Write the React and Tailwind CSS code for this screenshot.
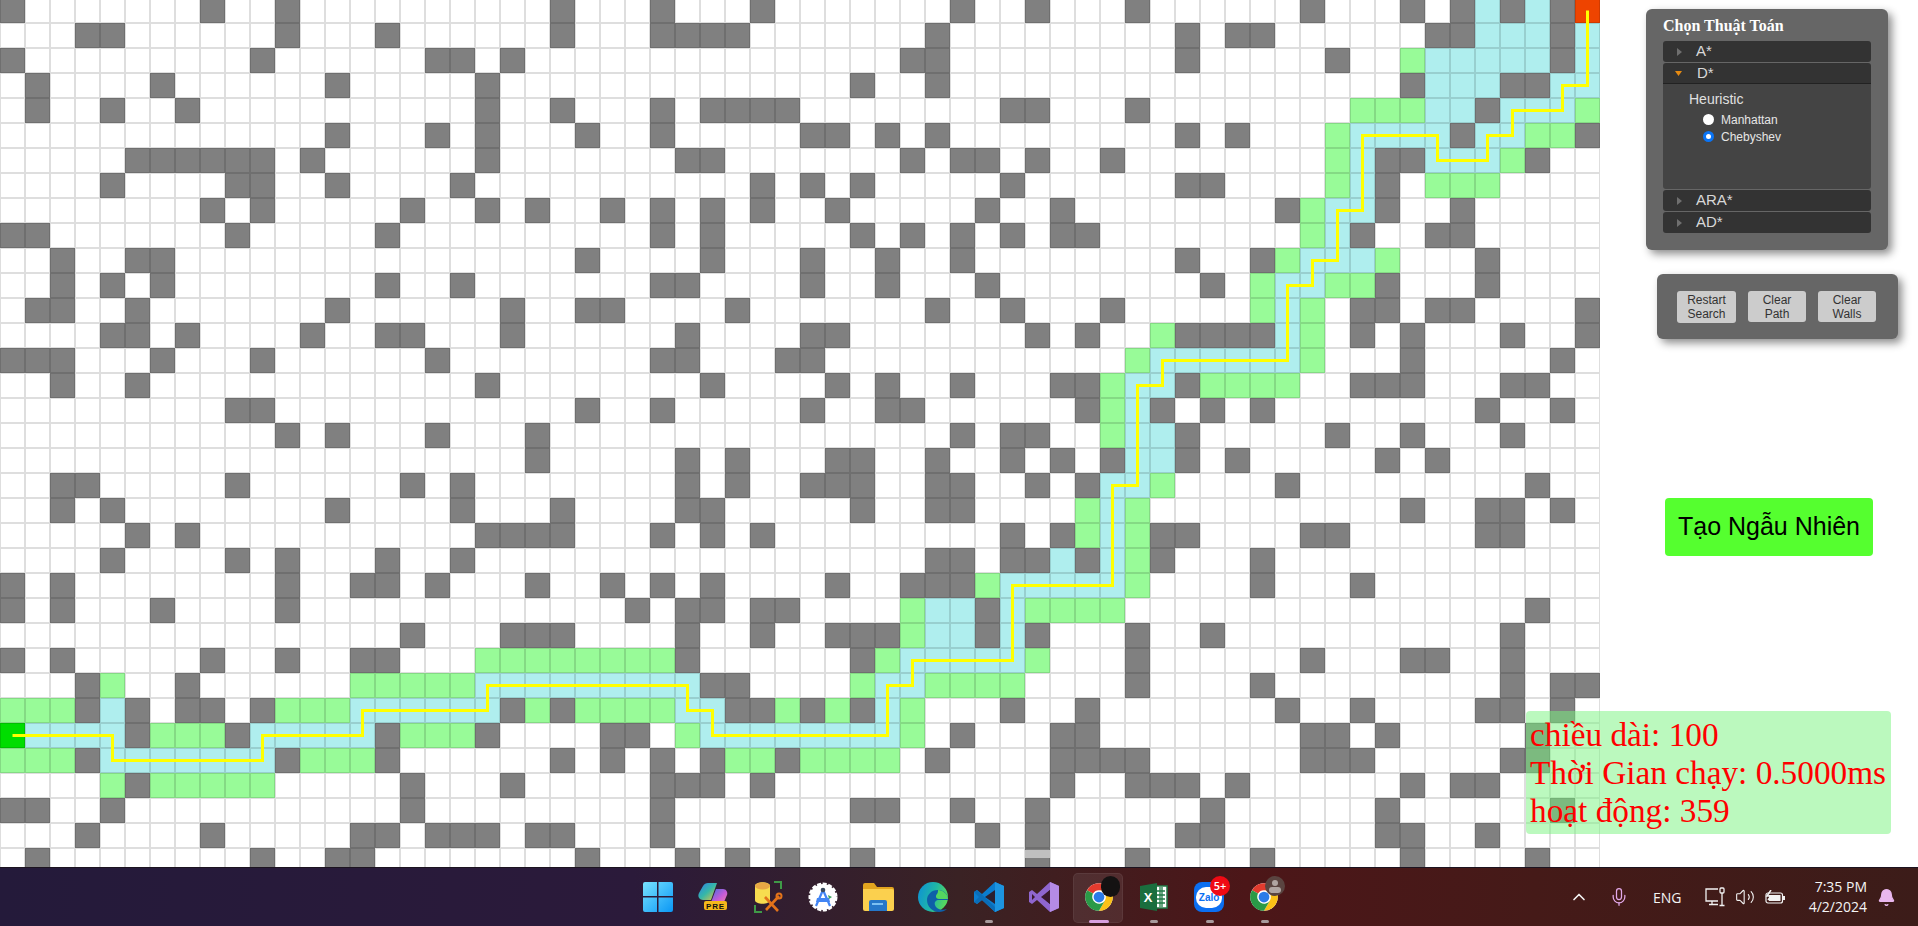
import React from 'react';
import { ChevronUp, Mic, Volume2, Bell } from 'lucide-react';

const COLS = 64;
const ROWS = 35;

const range = (a, b) => Array.from({ length: b - a + 1 }, (_, i) => a + i);

const WALLS = [
  [0, 8, 11, 22, 26, 30, 38, 41, 45, 52, 56, 58, 60, 62],
  [3, 4, 11, 15, 22, 26, 27, 28, 29, 37, 47, 49, 50, 57, 58, 62],
  [0, 10, 17, 18, 20, 36, 37, 47, 53, 62],
  [1, 6, 13, 19, 34, 37, 56, 60, 61],
  [1, 4, 7, 19, 22, 26, 28, 29, 30, 31, 40, 41, 45, 59],
  [13, 17, 19, 23, 26, 32, 33, 35, 37, 47, 49, 58, 63],
  [5, 6, 7, 8, 9, 10, 12, 19, 27, 28, 36, 38, 39, 41, 44, 55, 56, 61],
  [4, 9, 10, 13, 18, 30, 32, 34, 40, 47, 48, 55],
  [8, 10, 16, 19, 21, 24, 26, 28, 30, 33, 39, 42, 51, 55, 58],
  [0, 1, 9, 15, 26, 28, 34, 36, 38, 40, 42, 43, 54, 57, 58],
  [2, 5, 6, 23, 28, 32, 35, 38, 47, 50, 59],
  [2, 4, 6, 15, 18, 26, 27, 32, 35, 39, 48, 55, 59],
  [1, 2, 5, 13, 20, 23, 24, 29, 37, 40, 44, 54, 55, 57, 58, 63],
  [4, 5, 7, 12, 15, 16, 20, 27, 32, 33, 41, 43, 47, 48, 49, 50, 54, 56, 60, 63],
  [0, 1, 2, 6, 10, 17, 26, 27, 31, 32, 56, 62],
  [2, 5, 19, 28, 33, 35, 38, 42, 43, 47, 54, 55, 56, 60, 61],
  [9, 10, 23, 26, 32, 35, 36, 43, 46, 48, 50, 59, 62],
  [11, 13, 17, 21, 38, 40, 41, 47, 53, 56, 60],
  [21, 27, 29, 33, 34, 37, 40, 42, 44, 47, 49, 55, 57],
  [2, 3, 9, 16, 18, 27, 29, 32, 33, 34, 37, 38, 41, 43, 51, 61],
  [2, 4, 13, 18, 22, 27, 28, 34, 37, 38, 56, 59, 60, 62],
  [5, 7, 19, 20, 21, 22, 26, 28, 30, 40, 42, 46, 47, 52, 53, 59, 60],
  [4, 9, 11, 15, 18, 37, 38, 40, 41, 43, 46, 50],
  [0, 2, 11, 14, 15, 17, 21, 24, 26, 28, 33, 36, 37, 38, 50, 54],
  [0, 2, 6, 11, 25, 27, 28, 30, 31, 39, 61],
  [16, 20, 21, 22, 27, 30, 33, 34, 35, 39, 41, 45, 48, 60],
  [0, 2, 8, 11, 14, 15, 27, 34, 45, 52, 56, 57, 60],
  [3, 7, 28, 29, 45, 50, 60, 62, 63],
  [3, 5, 7, 8, 10, 20, 22, 29, 30, 32, 34, 40, 43, 51, 54, 59, 60, 62],
  [5, 9, 15, 19, 24, 25, 38, 42, 43, 52, 53, 55, 61],
  [3, 11, 15, 22, 24, 26, 28, 31, 37, 42, 43, 44, 45, 52, 53, 54, 60, 61],
  [5, 16, 20, 26, 27, 28, 30, 42, 45, 46, 47, 49, 56, 58, 59],
  [0, 1, 4, 16, 26, 34, 35, 38, 41, 48, 55, 62],
  [3, 8, 14, 15, 17, 18, 19, 21, 22, 26, 39, 41, 47, 48, 55, 56, 59],
  [1, 10, 13, 14, 23, 27, 29, 31, 34, 41, 45, 50, 56, 61],
];

// row -> columns
const OPENED = {
  2: [56],
  4: [54, 55, 56, 63],
  5: [53, 61, 62],
  6: [53, 60],
  7: [53, 57, 58, 59],
  8: [52],
  9: [52],
  10: [51, 55],
  11: [50, 53, 54],
  12: [50, 52],
  13: [46, 52],
  14: [45, 52],
  15: [44, 48, 49, 50, 51],
  16: [44],
  17: [44],
  19: [46],
  20: [43, 45],
  21: [43, 45],
  22: [45],
  23: [39, 45],
  24: [36, 41, 42, 43, 44],
  25: [36],
  26: [...range(19, 26), 35, 41],
  27: [4, ...range(14, 18), 34, 37, 38, 39, 40],
  28: [0, 1, 2, 11, 12, 13, 21, 23, 24, 25, 26, 31, 33, 36],
  29: [6, 7, 8, 16, 17, 18, 27, 36],
  30: [0, 1, 2, 12, 13, 14, 29, 30, 32, 33, 34, 35],
  31: [4, ...range(6, 10)],
};

const CLOSED = {
  0: [59, 61],
  1: [59, 60, 61, 63],
  2: [57, 58, 59, 60, 61, 63],
  3: [57, 58, 59, 62, 63],
  4: [57, 58, 60, 61, 62],
  5: [54, 55, 56, 57, 59, 60],
  6: [54, 57, 58, 59],
  7: [54],
  8: [53, 54],
  9: [53],
  10: [52, 53, 54],
  11: [51, 52],
  12: [51],
  13: [51],
  14: range(46, 51),
  15: [45, 46],
  16: [45],
  17: [45, 46],
  18: [45, 46],
  19: [44, 45],
  20: [44],
  21: [44],
  22: [42, 44],
  23: range(40, 44),
  24: [37, 38, 40],
  25: [37, 38, 40],
  26: range(36, 40),
  27: [...range(19, 27), 35, 36],
  28: [4, ...range(14, 19), 27, 28, 35],
  29: [1, 2, 3, 4, ...range(10, 14), ...range(28, 35)],
  30: range(4, 10),
};

// [col, row] corners of the yellow line, goal to start
const PATH = [
  [63, 0], [63, 3], [62, 3], [62, 4], [60, 4], [60, 5], [59, 5], [59, 6], [57, 6], [57, 5], [54, 5], [54, 8],
  [53, 8], [53, 10], [52, 10], [52, 11], [51, 11], [51, 14], [46, 14], [46, 15], [45, 15], [45, 19], [44, 19],
  [44, 23], [40, 23], [40, 26], [36, 26], [36, 27], [35, 27], [35, 29], [28, 29], [28, 28], [27, 28], [27, 27],
  [19, 27], [19, 28], [14, 28], [14, 29], [10, 29], [10, 30], [4, 30], [4, 29], [0, 29],
];

const CELL_COLORS = {
  free: 'bg-white',
  wall: 'bg-[#808080]',
  opened: 'bg-[#98fb98]',
  closed: 'bg-[#afeeee]',
  start: 'bg-[#00dd00]',
  goal: 'bg-[#ee4400]',
};

const cellType = (row, col) => {
  if (row === 29 && col === 0) return 'start';
  if (row === 0 && col === 63) return 'goal';
  if (WALLS[row].includes(col)) return 'wall';
  if (OPENED[row]?.includes(col)) return 'opened';
  if (CLOSED[row]?.includes(col)) return 'closed';
  return 'free';
};

const Grid = () => (
  <div className="relative w-[1600px] shrink-0 -mt-[2px]">
    {range(0, ROWS - 1).map((row) => (
      <div key={row} className="flex">
        {range(0, COLS - 1).map((col) => (
          <div
            key={col}
            className={`w-[25px] h-[25px] shrink-0 shadow-[inset_0_0_0_1px_rgba(0,0,0,0.13)] ${CELL_COLORS[cellType(row, col)]}`}
          />
        ))}
      </div>
    ))}
    <svg className="absolute left-0 top-0" width="1600" height="875">
      <polyline
        points={PATH.map(([c, r]) => `${c * 25 + 12.5},${r * 25 + 12.5}`).join(' ')}
        fill="none"
        stroke="#ffff00"
        strokeWidth="3"
      />
    </svg>
  </div>
);

const Arrow = ({ open }) =>
  open ? (
    <svg width="7" height="5" className="ml-[12px] mr-[15px]">
      <polygon points="0,0 7,0 3.5,5" fill="#e58a12" />
    </svg>
  ) : (
    <svg width="5" height="8" className="ml-[14px] mr-[14px]">
      <polygon points="0,0 5,4 0,8" fill="#6f6f6f" />
    </svg>
  );

const AccordionHeader = ({ title, open }) => (
  <div className={`flex items-center h-[21px] bg-[#333333] text-[#d8d8d8] text-[15px] ${open ? 'rounded-t-[3px] border-b border-[#222222]' : 'rounded-[3px]'}`}>
    <Arrow open={open} />
    <span>{title}</span>
  </div>
);

const Radio = ({ label, checked }) => (
  <div className="flex items-center h-[17px] pl-[14px] text-[12px] text-[#e6e6e6]">
    {checked ? (
      <span className="w-[11px] h-[11px] rounded-full bg-white border-[3px] border-[#0a74f5] mr-[7px]" />
    ) : (
      <span className="w-[11px] h-[11px] rounded-full bg-white mr-[7px]" />
    )}
    {label}
  </div>
);

const AlgorithmPanel = () => (
  <div className="w-[242px] h-[241px] mt-[9px] ml-[46px] rounded-[6px] bg-[#666666] shadow-[4px_4px_8px_rgba(0,0,0,0.45)] pt-[8px] px-[17px]">
    <h1 className="text-[16px] font-bold text-white leading-[18px] h-[24px] font-['Liberation_Serif',serif]">Chọn Thuật Toán</h1>
    <div className="flex flex-col gap-[1px]">
      <AccordionHeader title="A*" />
      <div>
        <AccordionHeader title="D*" open />
        <div className="h-[105px] bg-[#444444] rounded-b-[3px] pt-[6px] pl-[26px]">
          <div className="text-[14px] text-[#e0e0e0] leading-[18px] mb-[3px]">Heuristic</div>
          <Radio label="Manhattan" />
          <Radio label="Chebyshev" checked />
        </div>
      </div>
      <AccordionHeader title="ARA*" />
      <AccordionHeader title="AD*" />
    </div>
  </div>
);

const ControlButton = ({ children, className }) => (
  <button className={`h-[31px] rounded-[3px] bg-[#cccccc] text-[#333333] text-[12px] leading-[14px] ${className}`}>{children}</button>
);

const ControlPanel = () => (
  <div className="w-[241px] h-[65px] mt-[24px] ml-[57px] rounded-[6px] bg-[#666666] shadow-[4px_4px_8px_rgba(0,0,0,0.45)] flex items-center pl-[20px] gap-[12px]">
    <ControlButton className="w-[59px] h-[32px]">Restart<br />Search</ControlButton>
    <ControlButton className="w-[58px]">Clear<br />Path</ControlButton>
    <ControlButton className="w-[58px]">Clear<br />Walls</ControlButton>
  </div>
);

const ChromeLogo = ({ size = 30 }) => (
  <svg width={size} height={size} viewBox="0 0 24 24">
    <circle cx="12" cy="12" r="11" fill="#fff" />
    <path d="M2.47 6.5A11 11 0 0 1 21.53 6.5L12 6.5A5.5 5.5 0 0 0 7.24 9.25Z" fill="#e33b2e" />
    <path d="M21.53 6.5A11 11 0 0 1 12 23L16.76 14.75A5.5 5.5 0 0 0 12 6.5Z" fill="#fbc116" />
    <path d="M12 23A11 11 0 0 1 2.47 6.5L7.24 9.25A5.5 5.5 0 0 0 16.76 14.75Z" fill="#2a9a47" />
    <circle cx="12" cy="12" r="4.3" fill="#2a7be8" />
  </svg>
);

const WindowsLogo = () => (
  <svg width="30" height="30" viewBox="0 0 30 30">
    <defs>
      <linearGradient id="win" x1="0" y1="0" x2="1" y2="1">
        <stop offset="0" stopColor="#78e3ff" />
        <stop offset="1" stopColor="#0a97f5" />
      </linearGradient>
    </defs>
    <path d="M2 0h12v14H0V2a2 2 0 0 1 2-2zM15.500 0H28a2 2 0 0 1 2 2v12H15.500zM0 15.500h14V30H2a2 2 0 0 1-2-2zM15.500 15.500H30V28a2 2 0 0 1-2 2H15.500z" fill="url(#win)" />
  </svg>
);

const CopilotLogo = () => (
  <svg width="32" height="32" viewBox="0 0 32 32">
    <defs>
      <linearGradient id="cop1" x1="0" y1="0" x2="1" y2="1">
        <stop offset="0" stopColor="#2f7fe8" />
        <stop offset="0.5" stopColor="#35b7a8" />
        <stop offset="1" stopColor="#f0c33a" />
      </linearGradient>
      <linearGradient id="cop2" x1="0" y1="0" x2="1" y2="1">
        <stop offset="0" stopColor="#3c6fe0" />
        <stop offset="0.55" stopColor="#c55bd8" />
        <stop offset="1" stopColor="#f7889d" />
      </linearGradient>
    </defs>
    <path d="M11 2h9l-6 17H6c-3 0-6-3-4-7l4-7c1-2 3-3 5-3z" fill="url(#cop1)" />
    <path d="M19 8h7c3 0 5 3 4 6l-3 7c-1 2-2 3-5 3h-9z" fill="url(#cop2)" />
    <rect x="7" y="20" width="23" height="9" rx="2" fill="#f5b81b" />
    <text x="18.500" y="27.500" textAnchor="middle" fontSize="8" fontWeight="700" fill="#111" fontFamily="Liberation Sans, sans-serif" letterSpacing="0.8">PRE</text>
  </svg>
);

const DbToolLogo = () => (
  <svg width="32" height="32" viewBox="0 0 32 32">
    <path d="M22 1h7v7M3 24v7h7" fill="none" stroke="#3f9a47" strokeWidth="2" />
    <path d="M3 5c0-5 15-5 15 0v14c0 5-15 5-15 0z" fill="#f7dc4f" />
    <ellipse cx="10.500" cy="5" rx="7.500" ry="3.500" fill="#e8a845" />
    <path d="M13 16l13 14M27 15L14 29" stroke="#e3731a" strokeWidth="2.600" />
    <circle cx="27" cy="15" r="2.500" fill="none" stroke="#e3731a" strokeWidth="2" />
  </svg>
);

const AndroidStudioLogo = () => (
  <svg width="30" height="30" viewBox="0 0 30 30">
    <circle cx="15" cy="15" r="13" fill="#fff" stroke="#fff" strokeWidth="3" strokeDasharray="4 1.500" />
    <path d="M15 8l7 16M15 8L8 24" stroke="#4285f4" strokeWidth="2.200" fill="none" />
    <path d="M9 16h12l1 4H8z" fill="#4285f4" />
    <circle cx="15" cy="8" r="2.300" fill="#3a4a5c" />
    <path d="M20 13l4 2-3 2z" fill="#3ba55d" />
  </svg>
);

const FolderLogo = () => (
  <svg width="31" height="28" viewBox="0 0 31 28">
    <path d="M0 2a2 2 0 0 1 2-2h9l3 4h15a2 2 0 0 1 2 2v3H0z" fill="#e2a51f" />
    <path d="M0 6h29a2 2 0 0 1 2 2v18a2 2 0 0 1-2 2H2a2 2 0 0 1-2-2z" fill="#fbd04e" />
    <path d="M6 19a2 2 0 0 1 2-2h14a2 2 0 0 1 2 2v9H6z" fill="#2577c9" />
    <rect x="9" y="20" width="11" height="2" fill="#7cc0f2" />
  </svg>
);

const EdgeLogo = () => (
  <svg width="30" height="30" viewBox="0 0 30 30">
    <defs>
      <linearGradient id="edge" x1="0" y1="0" x2="1" y2="0.300">
        <stop offset="0" stopColor="#0c8fd8" />
        <stop offset="0.6" stopColor="#1fb7a6" />
        <stop offset="1" stopColor="#54d660" />
      </linearGradient>
    </defs>
    <circle cx="15" cy="15" r="15" fill="url(#edge)" />
    <path d="M30 17c0-5-4-9-10-9-7 0-11 5-11 10 0 6 5 12 12 12 3 0 6-1 8-3-5 2-11 0-12-4-1-3 1-5 4-5h9z" fill="#0e5fa8" />
    <path d="M20 8c5 0 10 4 10 9h-9c-3 0-4-3-2-5 1-1 1-3 1-4z" fill="#54d660" />
  </svg>
);

const VsCodeLogo = () => (
  <svg width="30" height="30" viewBox="0 0 30 30">
    <path d="M21 0l9 4v22l-9 4L8 18l-5 4-3-2v-10l3-2 5 4z" fill="#0b7dcf" />
    <path d="M21 8L11 15l10 7z" fill="#2b2030" />
    <path d="M21 0l9 4v22l-9 4z" fill="#1d95e0" />
    <path d="M0 10l3-2 18 17v5L8 18 3 22l-3-2 5-5z" fill="#0a6db8" />
  </svg>
);

const VisualStudioLogo = () => (
  <svg width="30" height="30" viewBox="0 0 30 30">
    <path d="M21 0l9 4v22l-9 4L8 18l-5 4-3-2V10l3-2 5 4z" fill="#8f66cf" />
    <path d="M21 8L12 15l9 7z" fill="#3a1a2c" />
    <path d="M6 15L3 12v6z" fill="#3a1a2c" />
    <path d="M21 0l9 4v22l-9 4z" fill="#b58be6" />
    <path d="M21 8v14l-4-3.500V11.500z" fill="#3a1a2c" />
  </svg>
);

const ExcelLogo = () => (
  <svg width="28" height="28" viewBox="0 0 28 28">
    <rect x="12" y="3" width="15" height="22" fill="#fff" stroke="#1f7a45" strokeWidth="1.500" />
    <path d="M16 8h9M16 12h9M16 16h9M16 20h9M20 4v20M22 4v20" stroke="#1f7a45" strokeWidth="1.300" />
    <path d="M0 3l17-3v28L0 25z" fill="#1a6e3e" />
    <text x="8" y="19" textAnchor="middle" fontSize="13" fontWeight="700" fill="#fff" fontFamily="Liberation Sans, sans-serif">X</text>
  </svg>
);

const ZaloLogo = () => (
  <div className="relative w-[30px] h-[30px] rounded-[8px] bg-[#0b6ff2] flex items-center justify-center">
    <div className="w-[26px] h-[21px] rounded-[10px] bg-white flex items-center justify-center text-[10px] font-bold text-[#0b6ff2] font-['Liberation_Sans',sans-serif]">Zalo</div>
  </div>
);

const TaskbarItem = ({ children, active, running, overlay }) => (
  <div className="relative w-[55.15px] h-[59px] shrink-0 flex items-center justify-center">
    {active && <div className="absolute left-[2px] top-[5px] w-[50px] h-[50px] rounded-[5px] bg-white/[0.08] border border-white/[0.06]" />}
    <div className="relative">{children}{overlay}</div>
    {active && <div className="absolute left-[18px] bottom-[4px] w-[20px] h-[3px] rounded-full bg-[#d9a0e0]" />}
    {running && <div className="absolute left-[24px] bottom-[4px] w-[8px] h-[3px] rounded-full bg-[#a89a9c]" />}
  </div>
);

const NetworkIcon = () => (
  <svg width="20" height="20" viewBox="0 0 20 20" fill="none" stroke="#f2f2f2" strokeWidth="1.300">
    <path d="M13 2H1v12h12M4 17.500h9M7 14v3.500" />
    <rect x="15" y="1" width="4" height="5" rx="1" />
    <path d="M17 6v12M14.500 18.500h5" />
  </svg>
);

const BatteryIcon = () => (
  <svg width="21" height="14" viewBox="0 0 21 14" fill="none" stroke="#f2f2f2" strokeWidth="1.200">
    <rect x="1" y="3" width="16.500" height="10" rx="2" />
    <rect x="4" y="5" width="11.500" height="6" fill="#f2f2f2" stroke="none" />
    <path d="M19 6v4" strokeWidth="2" />
    <path d="M6 0L2 6h4L3 10" stroke="#f2f2f2" strokeWidth="1.500" />
  </svg>
);

const Taskbar = () => (
  <div className="relative h-[59px] shrink-0 flex items-center justify-center pl-[4px] border-t border-[#1c1420] bg-[linear-gradient(90deg,#241a3a_0%,#2b1a3a_33%,#3a2224_50%,#4c1618_65%,#451a18_80%,#3c1c19_100%)] font-['Open_Sans',sans-serif]">
    <TaskbarItem><WindowsLogo /></TaskbarItem>
    <TaskbarItem><CopilotLogo /></TaskbarItem>
    <TaskbarItem><DbToolLogo /></TaskbarItem>
    <TaskbarItem><AndroidStudioLogo /></TaskbarItem>
    <TaskbarItem><FolderLogo /></TaskbarItem>
    <TaskbarItem><EdgeLogo /></TaskbarItem>
    <TaskbarItem running><VsCodeLogo /></TaskbarItem>
    <TaskbarItem><VisualStudioLogo /></TaskbarItem>
    <TaskbarItem active overlay={<div className="absolute -right-[6px] -top-[6px] w-[19px] h-[21px] rounded-full bg-[#141212]" />}>
      <ChromeLogo />
    </TaskbarItem>
    <TaskbarItem running><ExcelLogo /></TaskbarItem>
    <TaskbarItem running overlay={<div className="absolute -right-[6px] -top-[6px] w-[20px] h-[20px] rounded-full bg-[#f00a14] text-white text-[11px] font-semibold flex items-center justify-center">5+</div>}>
      <ZaloLogo />
    </TaskbarItem>
    <TaskbarItem running overlay={<div className="absolute -right-[6px] -top-[6px] w-[20px] h-[20px] rounded-full bg-[#5a4440] flex flex-col items-center justify-center"><div className="w-[6px] h-[6px] rounded-full bg-[#b0a5a2]" /><div className="w-[12px] h-[6px] rounded-full bg-[#b0a5a2] mt-[1px]" /></div>}>
      <ChromeLogo />
    </TaskbarItem>

    <div className="absolute left-[1569px] top-0 h-[58px] w-[349px] flex items-center text-[#f4f4f4]">
      <ChevronUp size={20} strokeWidth={2} className="shrink-0" />
      <Mic size={20} strokeWidth={1.500} className="ml-[20px] shrink-0 text-[#e3a9ea]" />
      <span className="ml-[24px] w-[32px] text-[14px]">ENG</span>
      <div className="ml-[20px] shrink-0"><NetworkIcon /></div>
      <Volume2 size={20} strokeWidth={1.300} className="ml-[10px] shrink-0" />
      <div className="ml-[10px] shrink-0"><BatteryIcon /></div>
      <div className="ml-[4px] w-[77px] text-right text-[14px] leading-[20px]">
        <div>7:35 PM</div>
        <div>4/2/2024</div>
      </div>
      <Bell size={19} strokeWidth={1.500} className="ml-[10px] shrink-0 text-[#e9b7ee]" fill="#e9b7ee" />
    </div>
  </div>
);

export default function App() {
  return (
    <div className="h-[926px] w-[1918px] overflow-hidden flex flex-col bg-white font-['Liberation_Sans',Arial,sans-serif]">
      <div className="relative h-[867px] flex overflow-hidden">
        <Grid />
        <aside className="flex-1 flex flex-col items-start">
          <AlgorithmPanel />
          <ControlPanel />
          <button className="mt-[159px] ml-[65px] w-[208px] h-[58px] rounded-[4px] bg-[#55ff2f] text-black text-[25px]">Tạo Ngẫu Nhiên</button>
        </aside>

        {/* stats box lies over the grid */}
        <div className="absolute left-[1526px] top-[711px] w-[365px] h-[123px] rounded-[4px] bg-[rgba(119,243,125,0.5)] pl-[4px] pt-[5px] text-[33.3px] leading-[38px] text-[#ff0000] font-['Liberation_Serif',serif]">
          <div>chiều dài: 100</div>
          <div>Thời Gian chạy: 0.5000ms</div>
          <div>hoạt động: 359</div>
        </div>

        <div className="absolute left-[1025px] top-[850px] w-[25px] h-[8px] bg-[#c0c0c0]" />
      </div>
      <Taskbar />
    </div>
  );
}
